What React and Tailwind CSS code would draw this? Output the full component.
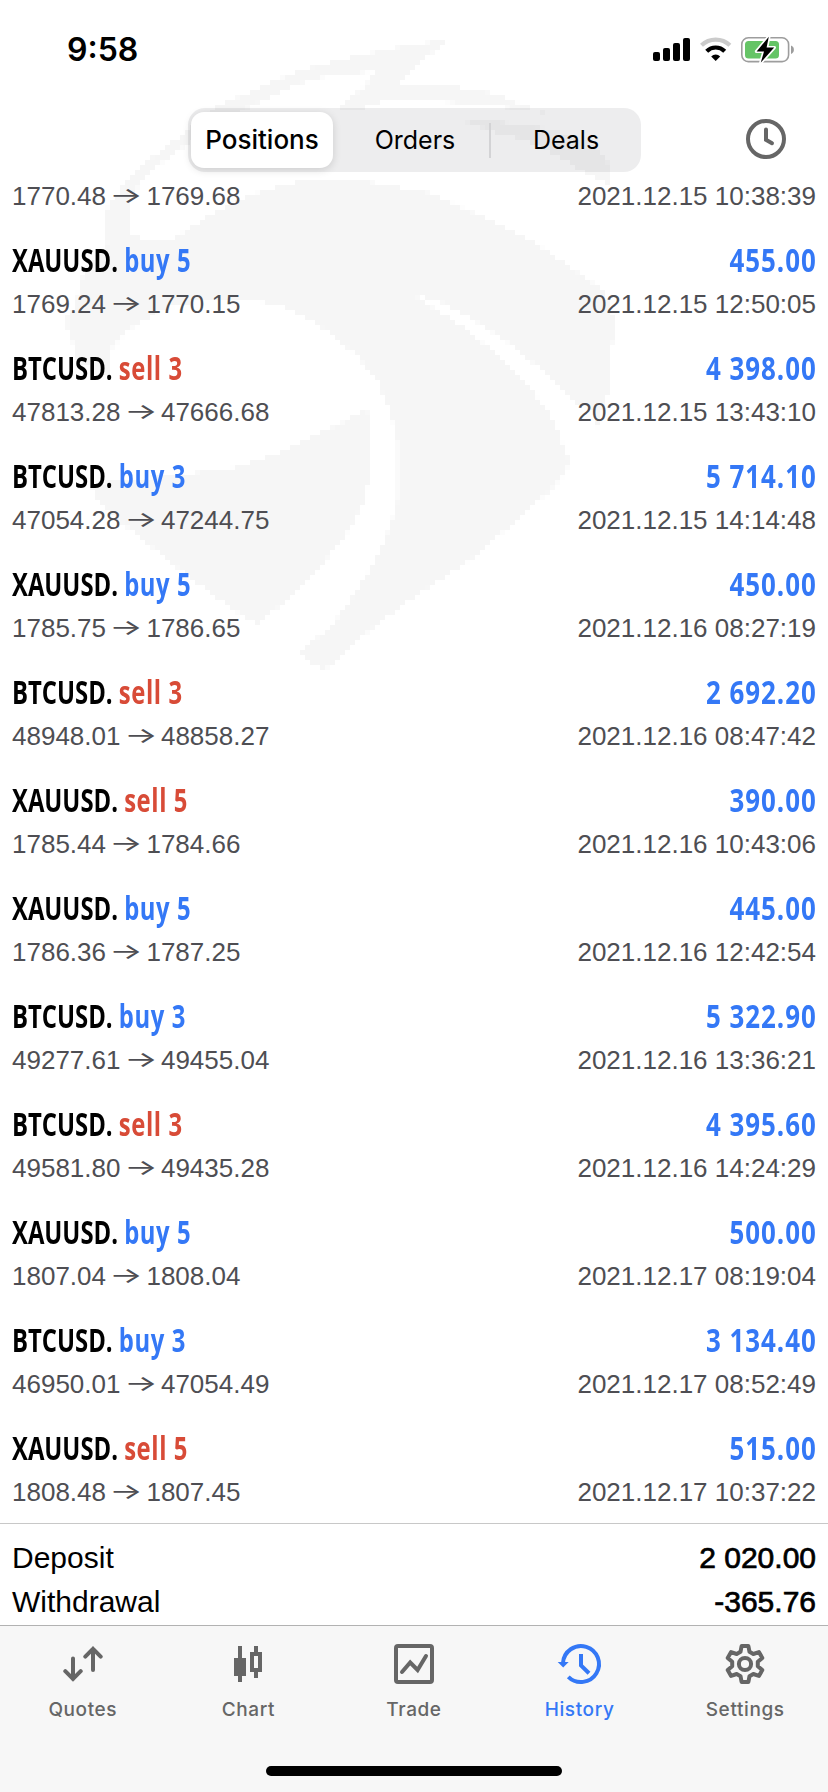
import React from 'react';

const positions = [
  { from: '1770.48', to: '1769.68', time: '2021.12.15 10:38:39' },
  { symbol: 'XAUUSD.', side: 'buy', lots: 5, profit: '455.00', from: '1769.24', to: '1770.15', time: '2021.12.15 12:50:05' },
  { symbol: 'BTCUSD.', side: 'sell', lots: 3, profit: '4 398.00', from: '47813.28', to: '47666.68', time: '2021.12.15 13:43:10' },
  { symbol: 'BTCUSD.', side: 'buy', lots: 3, profit: '5 714.10', from: '47054.28', to: '47244.75', time: '2021.12.15 14:14:48' },
  { symbol: 'XAUUSD.', side: 'buy', lots: 5, profit: '450.00', from: '1785.75', to: '1786.65', time: '2021.12.16 08:27:19' },
  { symbol: 'BTCUSD.', side: 'sell', lots: 3, profit: '2 692.20', from: '48948.01', to: '48858.27', time: '2021.12.16 08:47:42' },
  { symbol: 'XAUUSD.', side: 'sell', lots: 5, profit: '390.00', from: '1785.44', to: '1784.66', time: '2021.12.16 10:43:06' },
  { symbol: 'XAUUSD.', side: 'buy', lots: 5, profit: '445.00', from: '1786.36', to: '1787.25', time: '2021.12.16 12:42:54' },
  { symbol: 'BTCUSD.', side: 'buy', lots: 3, profit: '5 322.90', from: '49277.61', to: '49455.04', time: '2021.12.16 13:36:21' },
  { symbol: 'BTCUSD.', side: 'sell', lots: 3, profit: '4 395.60', from: '49581.80', to: '49435.28', time: '2021.12.16 14:24:29' },
  { symbol: 'XAUUSD.', side: 'buy', lots: 5, profit: '500.00', from: '1807.04', to: '1808.04', time: '2021.12.17 08:19:04' },
  { symbol: 'BTCUSD.', side: 'buy', lots: 3, profit: '3 134.40', from: '46950.01', to: '47054.49', time: '2021.12.17 08:52:49' },
  { symbol: 'XAUUSD.', side: 'sell', lots: 5, profit: '515.00', from: '1808.48', to: '1807.45', time: '2021.12.17 10:37:22' },
];

const summary = [
  { label: 'Deposit', value: '2 020.00' },
  { label: 'Withdrawal', value: '-365.76' },
];

// Broker logo behind the list
function Watermark() {
  return (
    <svg
      className="absolute left-[50px] top-[30px] w-[600px] h-[660px]"
      viewBox="0 0 600 660"
      fill="#f6f6f6"
      aria-hidden="true"
    >
      <defs>
        <filter id="mosaic" filterUnits="userSpaceOnUse" x="0" y="0" width="600" height="660">
          <feFlood x="2" y="2" width="1" height="1" floodColor="#000" />
          <feComposite width="5" height="5" />
          <feTile result="grid" />
          <feComposite in="SourceGraphic" in2="grid" operator="in" />
          <feMorphology operator="dilate" radius="2" />
        </filter>
      </defs>
      <g filter="url(#mosaic)">
        <g transform="scale(0.38265 0.42092)">
          <path d="M1043 25L960 32L860 50L740 75L640 100L540 140L440 180L350 245L270 300L200 360L155 415L139 440L140 480L150 505L100 560L75 605L70 650L45 680L45 710L60 745L72 785L120 812L152 825L152 765L210 710L290 665L400 640L520 640L600 655L660 678L720 712L800 772L855 832L890 910L908 980V1120L890 1175L860 1245L800 1335L740 1410L653 1480L690 1508L715 1522L770 1480L850 1415L970 1335L1090 1265L1200 1180L1300 1100L1350 1052L1355 1020L1330 960L1300 905L1230 822L1140 750L1080 705L975 645L950 628L1020 645L1100 685L1200 745L1290 812L1370 885L1425 900L1430 945L1450 880L1463 850V790L1477 700L1450 620L1370 570L1260 500L1180 465L1085 425L1000 388L900 372L830 360H650L560 380L480 410L400 450L340 485L310 500H250L205 480L204 425L215 395L245 350L300 310L360 270L420 235L500 192L560 165L640 130L730 108L855 98L820 135L745 195H790L868 170H1010L1100 175L1200 185L1300 198L1240 180L1170 152L1060 135L910 130L975 70Z" />
          <path d="M1060 210L1190 220L1300 234L1404 266L1450 297L1463 330V368L1395 337L1300 285L1230 258L1169 245L1120 228Z" />
          <path d="M825 900L840 925V1020L825 1110L780 1190L720 1260L640 1340L540 1412L500 1390L430 1345L330 1275L200 1180L120 1110L100 1080L330 1057L480 1040L600 1005L700 960L760 935Z" />
        </g>
      </g>
    </svg>
  );
}

function StatusBar() {
  return (
    <div className="h-[100px] flex items-center justify-between pl-[67px] pr-[32px]">
      <span className="font-['Inter',sans-serif] text-[32px] font-semibold leading-none">9:58</span>
      <svg width="144" height="32" viewBox="652 34 144 32" fill="none">
        {/* signal */}
        <g fill="#000">
          <rect x="653" y="52" width="7" height="9" rx="2" />
          <rect x="663" y="48" width="7" height="13" rx="2" />
          <rect x="673" y="43" width="7" height="18" rx="2" />
          <rect x="683" y="38" width="7" height="23" rx="2" />
        </g>
        {/* wifi */}
        <path d="M701.5 45.3A20.5 20.5 0 0 1 729.9 45.3" stroke="#cbcbcb" strokeWidth="4.2" />
        <path d="M706.7 51.2A12.8 12.8 0 0 1 724.7 51.2" stroke="#000" strokeWidth="4.2" />
        <path d="M715.7 61L711.2 56.4A6.5 6.5 0 0 1 720.2 56.4Z" fill="#000" />
        {/* battery */}
        <rect x="741.8" y="37.8" width="46.8" height="23.8" rx="6.5" stroke="#9d9d9d" strokeWidth="1.6" />
        <rect x="745" y="41" width="34" height="17.5" rx="3.5" fill="#65c466" />
        <path d="M791 45.5A4.5 4.5 0 0 1 791 53.9Z" fill="#9d9d9d" />
        <path
          d="M768.8 36.8L756.6 51.4H764L760.8 62.6L774.2 47.6H766.6Z"
          fill="#000"
          stroke="#fff"
          strokeWidth="3.4"
          paintOrder="stroke"
          strokeLinejoin="round"
        />
      </svg>
    </div>
  );
}

function Header() {
  return (
    <header className="relative h-[172px] shrink-0">
      <StatusBar />
      <div className="mt-2 h-16 flex items-center justify-between pl-[188px] pr-[42px] font-['Inter',sans-serif] text-[25px]">
        <div className="w-[453px] h-16 rounded-[17px] bg-[#76767a]/13 p-[3px] flex items-center">
          <button className="w-[142px] h-14 rounded-[13px] bg-white shadow-[0_2px_8px_rgba(0,0,0,0.14)] text-[26px] leading-none font-medium">
            Positions
          </button>
          <button className="w-[158px] h-[35px] pl-2 border-r-2 border-[#d3d3d5] leading-none">Orders</button>
          <button className="flex-1 pl-[3px] leading-none">Deals</button>
        </div>
        <svg className="-mt-0.5" width="40" height="40" viewBox="0 0 40 40" fill="none" stroke="#666" strokeWidth="4">
          <circle cx="20" cy="20" r="18" />
          <path d="M20 10.5V20.8L26 24.2" strokeLinecap="round" />
        </svg>
      </div>
    </header>
  );
}

function PositionRow({ item }) {
  return (
    <li className="h-[108px] shrink-0 px-3 pt-[15px]">
      <div className="h-9 flex justify-between font-['Open_Sans',sans-serif] text-[32px] leading-9 font-bold whitespace-pre">
        {item.symbol && (
          <>
            <span className="origin-left scale-x-[0.745]">
              {item.symbol}{' '}
              <span className={`tracking-[0.8px] ${item.side === 'buy' ? 'text-[#3478f6]' : 'text-[#d84b37]'}`}>
                {item.side} {item.lots}
              </span>
            </span>
            <span className="-mr-px origin-right scale-x-[0.81] tracking-[1.2px] text-[#3478f6]">{item.profit}</span>
          </>
        )}
      </div>
      <div className="mt-2.5 flex justify-between text-[26px] leading-8 text-[#4e4e53]">
        <span>
          {item.from}{' '}
          <span className="inline-block w-[26px] -translate-y-px scale-x-[1.35] scale-y-[0.85] text-center font-['Inter',sans-serif] leading-none">
            →
          </span>{' '}
          {item.to}
        </span>
        <span>{item.time}</span>
      </div>
    </li>
  );
}

function QuotesIcon() {
  return (
    <svg width="40" height="40" viewBox="0 0 40 40" fill="none" stroke="currentColor" strokeWidth="4" strokeLinecap="round">
      <path d="M10 14.5V35M2.3 27.2L10 35L17.7 27.2" />
      <path d="M30 26V5M22.3 12.6L30 4.8L37.7 12.6" />
    </svg>
  );
}

function ChartIcon() {
  return (
    <svg width="40" height="40" viewBox="0 0 40 40" fill="currentColor">
      <path d="M10 2H14V14H18V32H14V38H10V32H6V14H10Z" />
      <path fillRule="evenodd" d="M26 2H30V8H34V28H30V34H26V28H22V8H26ZM26 12V24H30V12Z" />
    </svg>
  );
}

function TradeIcon() {
  return (
    <svg width="40" height="40" viewBox="0 0 40 40" fill="none" stroke="currentColor" strokeWidth="4">
      <rect x="2" y="2" width="36" height="36" rx="2" />
      <path d="M8 28L16.2 18.5L23.6 26L32 12" strokeLinecap="round" />
    </svg>
  );
}

function HistoryIcon() {
  return (
    <svg className="overflow-visible" width="40" height="40" viewBox="0 0 40 40" fill="none" stroke="currentColor" strokeWidth="4">
      <path d="M3 19A18 18 0 1 1 8.3 32.8" />
      <path d="M21 10V21.5L29 29.3" />
      <path d="M-2.3 18H8.7L3.2 23.6Z" fill="currentColor" stroke="none" />
    </svg>
  );
}

function SettingsIcon() {
  return (
    <svg width="40" height="40" viewBox="-20 -20 40 40" fill="none" stroke="currentColor" strokeWidth="4">
      <path
        d="M-3.4 -18H3.4L4.5 -12.2L8.3 -10L13.9 -11.9L17.3 -6.1L12.8 -2.2V2.2L17.3 6.1L13.9 11.9L8.3 10L4.5 12.2L3.4 18H-3.4L-4.5 12.2L-8.3 10L-13.9 11.9L-17.3 6.1L-12.8 2.2V-2.2L-17.3 -6.1L-13.9 -11.9L-8.3 -10L-4.5 -12.2Z"
        strokeLinejoin="round"
      />
      <circle r="6.1" />
    </svg>
  );
}

const tabs = [
  { name: 'Quotes', Icon: QuotesIcon },
  { name: 'Chart', Icon: ChartIcon },
  { name: 'Trade', Icon: TradeIcon },
  { name: 'History', Icon: HistoryIcon, active: true },
  { name: 'Settings', Icon: SettingsIcon },
];

function TabBar() {
  return (
    <nav className="h-[167px] shrink-0 border-t border-[#b2b2b2] bg-[#f7f7f7] flex flex-col items-center">
      <div className="w-full grid grid-cols-5 pt-[18px]">
        {tabs.map(({ name, Icon, active }) => (
          <button
            key={name}
            className={`flex flex-col items-center ${active ? 'text-[#3478f6]' : 'text-[#666]'}`}
          >
            <Icon />
            <span className="mt-3.5 font-['Inter',sans-serif] text-[19px] leading-6 font-medium tracking-[0.6px]">
              {name}
            </span>
          </button>
        ))}
      </div>
      {/* Home indicator */}
      <div className="mt-11 w-[296px] h-2.5 rounded-full bg-black" />
    </nav>
  );
}

export default function App() {
  return (
    <div className="relative w-[828px] h-[1792px] overflow-hidden bg-white text-black flex flex-col font-['Liberation_Sans',Arial,sans-serif]">
      <Watermark />
      <Header />
      <ul className="relative flex-1 min-h-0 overflow-hidden flex flex-col justify-end">
        {positions.map((item) => (
          <PositionRow key={item.time} item={item} />
        ))}
      </ul>

      {/* Totals */}
      <div className="h-[102px] shrink-0 border-t border-[#c8c8c8] px-3 pt-3 text-[30px] leading-[44px]">
        {summary.map((row) => (
          <div key={row.label} className="flex justify-between">
            <span>{row.label}</span>
            <span className="[-webkit-text-stroke:0.7px_black]">{row.value}</span>
          </div>
        ))}
      </div>
      <TabBar />
    </div>
  );
}
